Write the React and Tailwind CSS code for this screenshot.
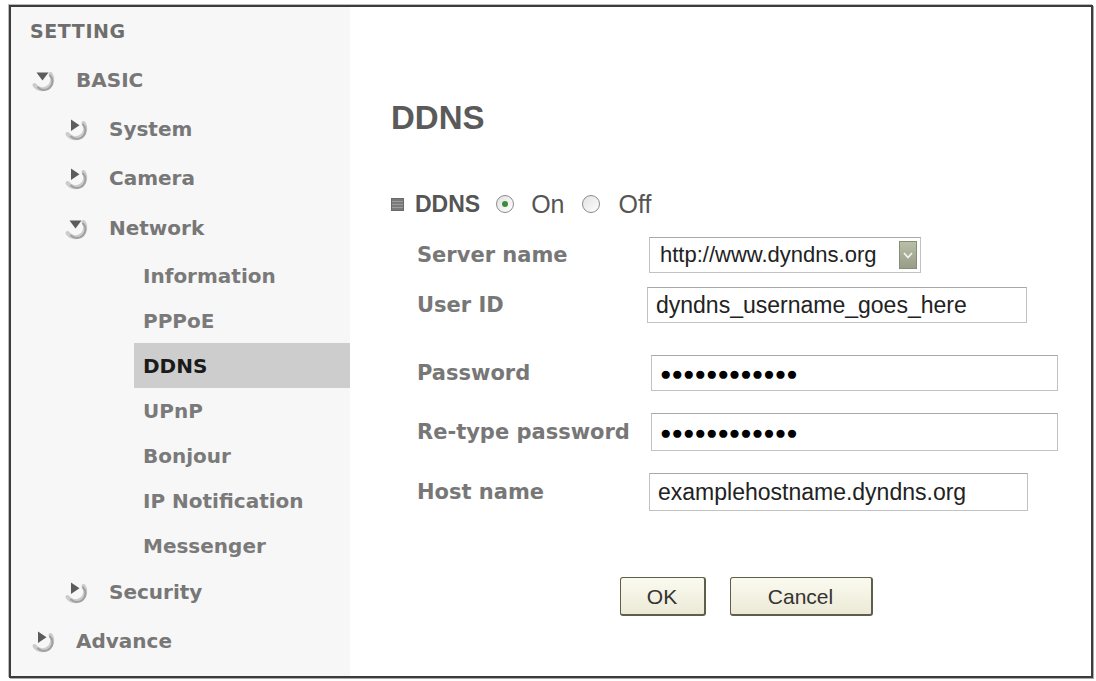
import React from "react";

const sans = { fontFamily: '"DejaVu Sans", Verdana, sans-serif' };
const arial = { fontFamily: '"Liberation Sans", Arial, sans-serif' };

// round "button" arrow used in the left menu
const NavIcon = ({ open }) => (
  <svg width="26" height="24" viewBox="0 0 26 24" className="shrink-0">
    <path d="M20.5 6 A9 9 0 1 1 4.5 17" fill="none" stroke="#cccccc" strokeWidth="4" strokeLinecap="round" />
    <path d="M20 7.5 A8 8 0 0 1 8 19.5" fill="none" stroke="#a0a0a0" strokeWidth="2" strokeLinecap="round" />
    {open ? (
      <path d="M6.5 4.5 L18.5 4.5 L12.5 12.5 Z" fill="#5c5c5c" />
    ) : (
      <path d="M8 2.5 L8 14 L16.5 8.2 Z" fill="#5c5c5c" />
    )}
  </svg>
);

const NavRow = ({ label, open, indent, h }) => (
  <div className={`flex items-center ${h} ${indent ? "pl-[52px]" : "pl-[19px]"}`}>
    <NavIcon open={open} />
    <span className="ml-[20px] text-[20px] font-bold leading-none text-[#777]">{label}</span>
  </div>
);

const SubRow = ({ label, active }) => (
  <div className="flex h-[45px] items-center pl-[123px]">
    <div
      className={`flex h-full w-full items-center pl-[9px] ${active ? "bg-[#cdcdcd] text-[#1a1a1a]" : "text-[#7a7a7a]"}`}
    >
      <span className="text-[20px] font-bold leading-none">{label}</span>
    </div>
  </div>
);

const Radio = ({ checked }) => (
  <span className="flex h-[18px] w-[18px] items-center justify-center rounded-full border border-[#8c8c8c] bg-gradient-to-br from-[#e2e2e2] to-white">
    {checked && <span className="h-[6px] w-[6px] rounded-full bg-[#3e8a3e]" />}
  </span>
);

const Field = ({ label, children, className }) => (
  <div className={`flex items-center pl-[26px] ${className}`}>
    <div className="w-[232px] text-[21px] font-bold leading-none text-[#777]" style={sans}>
      {label}
    </div>
    {children}
  </div>
);

const TextBox = ({ value, width, dots }) => (
  <div
    className={`flex h-full items-center border border-[#c2c2c2] border-t-[#a8a8a8] bg-white px-[8px] ${width}`}
    style={arial}
  >
    {dots ? (
      <span className="text-[19px] leading-none text-black">{"\u25CF".repeat(12)}</span>
    ) : (
      <span className="text-[23px] leading-none text-[#222]">{value}</span>
    )}
  </div>
);

export default function App() {
  return (
    <div className="min-h-screen bg-white pl-[9px] pt-[5px]">
      <div className="flex h-[673px] w-[1084px] border-2 border-[#3c3c3c] shadow-[1px_1px_0_#aaa,-1px_-1px_0_#bbb]">
        {/* left menu */}
        <div className="w-[339px] shrink-0 bg-[#f7f7f7]" style={sans}>
          <div className="flex h-[48px] items-center pl-[19px]">
            <span className="text-[19px] font-bold leading-none tracking-[0.6px] text-[#6e6e6e]">SETTING</span>
          </div>
          <NavRow label="BASIC" open h="h-[49px]" />
          <NavRow label="System" indent h="h-[49px]" />
          <NavRow label="Camera" indent h="h-[49px]" />
          <NavRow label="Network" open indent h="h-[51px]" />
          <SubRow label="Information" />
          <SubRow label="PPPoE" />
          <SubRow label="DDNS" active />
          <SubRow label="UPnP" />
          <SubRow label="Bonjour" />
          <SubRow label="IP Notification" />
          <SubRow label="Messenger" />
          <NavRow label="Security" indent h="h-[48px]" />
          <NavRow label="Advance" h="h-[50px]" />
        </div>

        {/* content */}
        <div className="flex flex-1 flex-col bg-white pl-[41px] pt-[90px]">
          <div className="flex h-[40px] items-center">
            <h1 className="text-[33px] font-bold leading-none text-[#5a5a5a]" style={arial}>
              DDNS
            </h1>
          </div>

          <div className="mt-[52px] flex h-[30px] items-center leading-none text-[#555]" style={arial}>
            <span className="h-[13px] w-[13px] border border-[#6a6a6a] bg-[repeating-linear-gradient(180deg,#7a7a7a_0px,#7a7a7a_2px,#9c9c9c_2px,#9c9c9c_3px)]" />
            <span className="ml-[11px] text-[23px] font-bold">DDNS</span>
            <span className="ml-[16px]">
              <Radio checked />
            </span>
            <span className="ml-[17px] text-[25px]">On</span>
            <span className="ml-[17px]">
              <Radio />
            </span>
            <span className="ml-[19px] text-[25px]">Off</span>
          </div>

          <Field label="Server name" className="mt-[18px] h-[36px]">
            <div
              className="flex h-full w-[272px] items-center justify-between border border-[#c2c2c2] border-t-[#a8a8a8] bg-white pl-[10px] pr-[3px]"
              style={arial}
            >
              <span className="text-[22px] leading-none text-[#222]">http://www.dyndns.org</span>
              <span className="flex h-[28px] w-[18px] items-center justify-center border border-[#868c76] bg-gradient-to-b from-[#b9bea9] to-[#979d86]">
                <svg width="10" height="7" viewBox="0 0 10 7">
                  <path d="M1 1 L5 5.5 L9 1" fill="none" stroke="#f2f2ea" strokeWidth="1.8" />
                </svg>
              </span>
            </div>
          </Field>

          <Field label="User ID" className="mt-[14px] h-[36px]">
            <TextBox value="dyndns_username_goes_here" width="w-[380px] -ml-[2px]" />
          </Field>

          <Field label="Password" className="mt-[32px] h-[36px]">
            <TextBox dots width="w-[407px] ml-[2px]" />
          </Field>

          <Field label="Re-type password" className="mt-[22px] h-[38px]">
            <TextBox dots width="w-[407px] ml-[2px]" />
          </Field>

          <Field label="Host name" className="mt-[22px] h-[38px]">
            <TextBox value="examplehostname.dyndns.org" width="w-[379px]" />
          </Field>

          <div className="mt-[66px] flex h-[39px] justify-center gap-[24px] pl-[10px]" style={arial}>
            <button className="h-full w-[86px] rounded-[3px] border border-b-2 border-r-2 border-[#5e5e4a] bg-gradient-to-b from-[#fbfaf0] to-[#ecead6] text-[21px] leading-none text-[#333]">
              OK
            </button>
            <button className="h-full w-[143px] rounded-[3px] border border-b-2 border-r-2 border-[#5e5e4a] bg-gradient-to-b from-[#fbfaf0] to-[#ecead6] text-[21px] leading-none text-[#333]">
              Cancel
            </button>
          </div>
        </div>
      </div>
    </div>
  );
}
